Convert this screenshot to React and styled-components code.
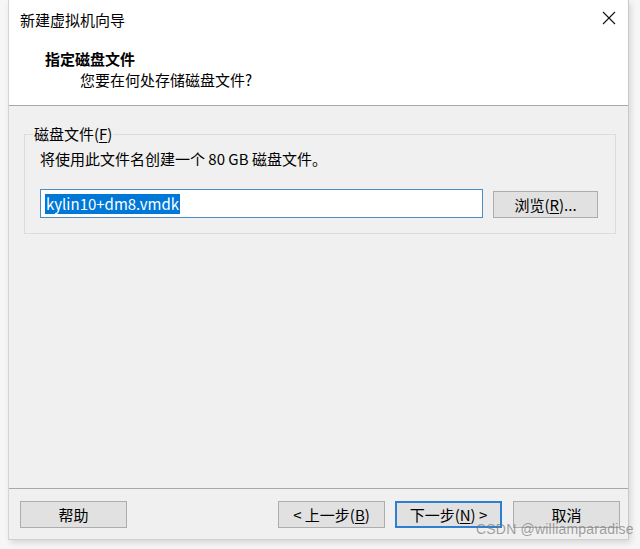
import React from "react";
import styled, { createGlobalStyle } from "styled-components";

const GlobalStyle = createGlobalStyle`
  html, body {
    margin: 0;
    padding: 0;
    background: #f6f6f6;
  }
  body {
    font-family: "Noto Sans CJK SC", "Noto Sans", sans-serif;
    color: #000;
  }
`;

const Page = styled.div`
  width: 640px;
  height: 549px;
  overflow: hidden;
  padding-left: 8px;
  box-sizing: border-box;
  position: relative;
`;

const Window = styled.div`
  width: 621px;
  height: 540px;
  background: #f0f0f0;
  border-left: 1px solid #d4d4d4;
  border-right: 1px solid #c8c8c8;
  border-bottom: 1px solid #d0d0d0;
  box-shadow: 2px 3px 6px rgba(0, 0, 0, 0.12);
  display: flex;
  flex-direction: column;
  box-sizing: border-box;
`;

const TitleBar = styled.div`
  height: 38px;
  background: #fff;
  display: flex;
  align-items: center;
  justify-content: space-between;
  padding: 0 12px 0 11px;
  font-size: 15px;
`;

const Close = styled.div`
  width: 14px;
  height: 14px;
  display: flex;
  margin-top: -2px;
`;

const Header = styled.div`
  height: 68px;
  background: #fff;
  border-bottom: 1px solid #a8a8a8;
  padding: 10px 0 0 36px;
  box-sizing: border-box;
`;

const HeadTitle = styled.div`
  font-size: 15px;
  font-weight: bold;
  line-height: 22px;
`;

const HeadSub = styled.div`
  font-size: 15px;
  line-height: 20px;
  padding-left: 35px;
`;

const Body = styled.div`
  flex: 1;
  padding: 18px 13px 0 15px;
`;

const Group = styled.fieldset`
  margin: 0;
  border: 1px solid #dcdcdc;
  padding: 0 17px 15px 15px;
  box-sizing: border-box;
`;

const Legend = styled.legend`
  font-size: 15px;
  padding: 0 1px;
  margin-left: -7px;
  line-height: 20px;
`;

const Info = styled.div`
  font-size: 15px;
  line-height: 20px;
  margin-top: 5px;
`;

const FileRow = styled.div`
  display: flex;
  align-items: flex-end;
  margin-top: 20px;
  gap: 10px;
`;

const FileInput = styled.div`
  width: 443px;
  height: 29px;
  border: 1px solid #4f8bbd;
  background: #fff;
  box-sizing: border-box;
  display: flex;
  align-items: center;
  padding-left: 4px;
  font-size: 15px;
`;

const Selected = styled.span`
  background: #0078d7;
  color: #fff;
  line-height: 20px;
  padding: 0 1px;
`;

const Button = styled.button`
  width: ${(p) => p.$w || 107}px;
  height: 27px;
  background: #e1e1e1;
  border: 1px solid ${(p) => (p.$primary ? "#2f7fd0" : "#adadad")};
  box-shadow: ${(p) => (p.$primary ? "inset 0 0 0 1px #2f7fd0" : "none")};
  font-family: "Noto Sans CJK SC", "Noto Sans", sans-serif;
  font-size: 15px;
  color: #000;
  padding: 0;
  display: flex;
  align-items: center;
  justify-content: center;
  box-sizing: border-box;
`;

const Key = styled.span`
  text-decoration: underline;
  text-underline-offset: 2px;
`;

const Footer = styled.div`
  height: 51px;
  border-top: 1px solid #a8a8a8;
  display: flex;
  align-items: flex-start;
  padding: 12px 0 0 11px;
  box-sizing: border-box;
`;

const Spacer = styled.div`
  flex: 1;
`;

const NavGroup = styled.div`
  display: flex;
  gap: 10px;
  margin-right: 11px;
`;

const Cancel = styled.div`
  margin-right: 8px;
`;

const Watermark = styled.div`
  position: absolute;
  left: 476px;
  top: 521px;
  font-family: "Liberation Sans", sans-serif;
  font-size: 14px;
  color: rgba(120, 120, 120, 0.7);
  letter-spacing: 0.2px;
  pointer-events: none;
`;

export default function App() {
  return (
    <>
      <GlobalStyle />
      <Page>
        <Window>
          <TitleBar>
            <span>新建虚拟机向导</span>
            <Close>
              <svg width="14" height="14" viewBox="0 0 14 14">
                <path d="M1 1L13 13M13 1L1 13" stroke="#111" strokeWidth="1.1" />
              </svg>
            </Close>
          </TitleBar>
          <Header>
            <HeadTitle>指定磁盘文件</HeadTitle>
            <HeadSub>您要在何处存储磁盘文件?</HeadSub>
          </Header>
          <Body>
            <Group>
              <Legend>
                磁盘文件(<Key>F</Key>)
              </Legend>
              <Info>将使用此文件名创建一个 80 GB 磁盘文件。</Info>
              <FileRow>
                <FileInput>
                  <Selected>kylin10+dm8.vmdk</Selected>
                </FileInput>
                <Button $w={105}>
                  浏览(<Key>R</Key>)...
                </Button>
              </FileRow>
            </Group>
          </Body>
          <Footer>
            <Button>帮助</Button>
            <Spacer />
            <NavGroup>
              <Button>
                &lt; 上一步(<Key>B</Key>)
              </Button>
              <Button $primary>
                下一步(<Key>N</Key>) &gt;
              </Button>
            </NavGroup>
            <Cancel>
              <Button>取消</Button>
            </Cancel>
          </Footer>
        </Window>
        <Watermark>CSDN @williamparadise</Watermark>
      </Page>
    </>
  );
}
